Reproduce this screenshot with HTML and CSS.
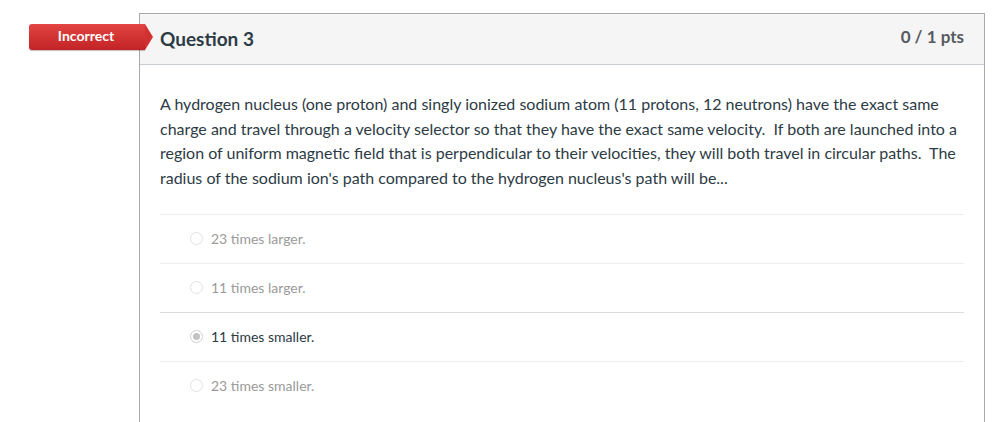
FILE: index.html
```html
<!DOCTYPE html>
<html>
<head>
<meta charset="utf-8">
<link rel="stylesheet" href="styles.css">
</head>
<body>
<div class="page">
  <div class="question">
    <div class="badge"><span>Incorrect</span></div>
    <div class="q-header">
      <span class="q-title">Question 3</span>
      <span class="q-pts">0 / 1 pts</span>
    </div>
    <div class="q-body">
      <p class="q-text">A hydrogen nucleus (one proton) and singly ionized sodium atom (11 protons, 12 neutrons) have the exact same charge and travel through a velocity selector so that they have the exact same velocity.&nbsp; If both are launched into a region of uniform magnetic field that is perpendicular to their velocities, they will both travel in circular paths.&nbsp; The radius of the sodium ion's path compared to the hydrogen nucleus's path will be...</p>
      <div class="answers">
        <div class="answer"><span class="radio"></span><span class="a-text">23 times larger.</span></div>
        <div class="answer"><span class="radio"></span><span class="a-text">11 times larger.</span></div>
        <div class="answer selected"><span class="radio"></span><span class="a-text">11 times smaller.</span></div>
        <div class="answer"><span class="radio"></span><span class="a-text">23 times smaller.</span></div>
      </div>
    </div>
  </div>
</div>
</body>
</html>
```
FILE: styles.css
```css
html, body {
  margin: 0;
  padding: 0;
  background: #fff;
}
body {
  font-family: Lato, "Open Sans", sans-serif;
  color: #2d3b45;
}
.page {
  padding: 13px 0 0 139px;
}
.question {
  position: relative;
  width: 846px;
  border: 1px solid #aaaaaa;
  border-bottom: none;
  min-height: 420px;
  box-sizing: border-box;
}
.badge {
  position: absolute;
  left: -111px;
  top: 10px;
  width: 116px;
  height: 26px;
  background: linear-gradient(#e24543, #c22325);
  border-radius: 3px 0 0 3px;
  box-shadow: 0 1px 1px rgba(0,0,0,0.25);
  display: flex;
  align-items: center;
  justify-content: center;
}
.badge::after {
  content: "";
  position: absolute;
  right: -8px;
  top: 0;
  border-top: 13px solid transparent;
  border-bottom: 13px solid transparent;
  border-left: 8px solid #d23131;
}
.badge span {
  color: #fff;
  font-weight: 700;
  font-size: 14px;
  margin-left: -2px;
  margin-top: -3px;
}
.q-header {
  height: 50px;
  background: #f5f5f5;
  border-bottom: 1px solid #c7cdd1;
  display: flex;
  align-items: center;
  justify-content: space-between;
  padding: 0 20px;
}
.q-title {
  font-size: 19px;
  font-weight: 700;
  color: #2d3b45;
  margin-top: -2px;
}
.q-pts {
  font-size: 17px;
  font-weight: 700;
  color: #555a5f;
  margin-top: -6px;
}
.q-body {
  padding: 27px 20px 0 20px;
}
.q-text {
  margin: 0 0 23px 0;
  font-size: 16px;
  line-height: 24.7px;
  color: #2d3b45;
}
.answers {
  display: flex;
  flex-direction: column;
}
.answer {
  height: 48px;
  border-top: 1px solid #eeeeee;
  display: flex;
  align-items: center;
  padding-left: 30px;
  font-size: 14px;
  color: #9a9a9a;
}
.answer.selected {
  border-top-color: #dcdcdc;
  color: #2d3b45;
}
.radio {
  width: 13px;
  height: 13px;
  border: 1px solid #e2e2e2;
  border-radius: 50%;
  box-sizing: border-box;
  margin-right: 8px;
  position: relative;
  background: #fff;
}
.selected .radio {
  border-color: #cfcfcf;
}
.selected .radio::after {
  content: "";
  position: absolute;
  left: 2px;
  top: 2px;
  width: 7px;
  height: 7px;
  border-radius: 50%;
  background: #c2c2c2;
}
```
